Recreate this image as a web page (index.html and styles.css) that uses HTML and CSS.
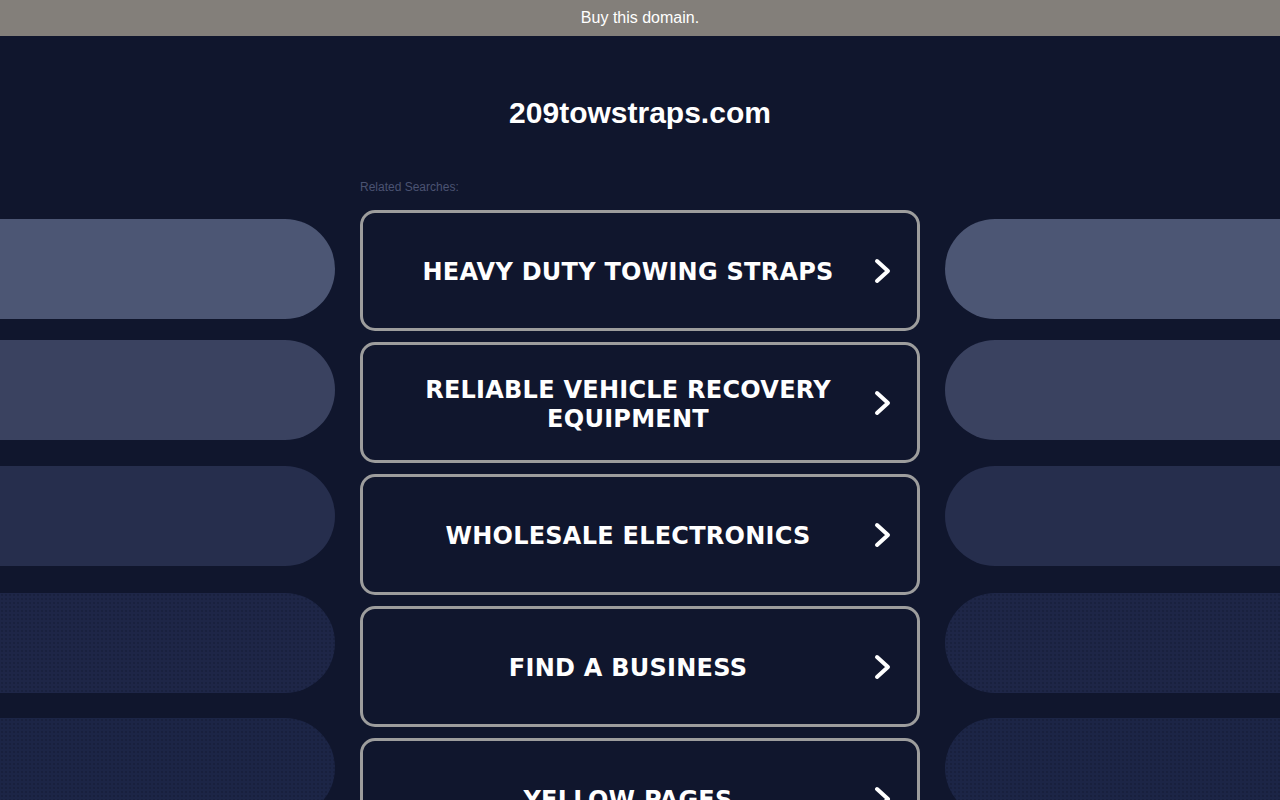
FILE: index.html
```html
<!DOCTYPE html>
<html lang="en">
<head>
<meta charset="utf-8">
<title>209towstraps.com</title>
<link rel="stylesheet" href="styles.css">
</head>
<body>
<div class="topbar"><a class="buy" href="#">Buy this domain.</a></div>
<header class="head">
  <h1 class="domain">209towstraps.com</h1>
  <div class="related-row"><span class="related">Related Searches:</span></div>
</header>
<div class="stage">
  <div class="pills pills-left">
    <div class="pill p1"></div>
    <div class="pill p2"></div>
    <div class="pill p3"></div>
    <div class="pill p4"></div>
    <div class="pill p5"></div>
  </div>
  <ul class="links">
    <li><a class="link" href="#"><span class="label">HEAVY DUTY TOWING STRAPS</span><svg class="chev" viewBox="0 0 20 28" width="20" height="28"><polyline points="4,4 15,14 4,24"/></svg></a></li>
    <li><a class="link" href="#"><span class="label">RELIABLE VEHICLE RECOVERY EQUIPMENT</span><svg class="chev" viewBox="0 0 20 28" width="20" height="28"><polyline points="4,4 15,14 4,24"/></svg></a></li>
    <li><a class="link" href="#"><span class="label">WHOLESALE ELECTRONICS</span><svg class="chev" viewBox="0 0 20 28" width="20" height="28"><polyline points="4,4 15,14 4,24"/></svg></a></li>
    <li><a class="link" href="#"><span class="label">FIND A BUSINESS</span><svg class="chev" viewBox="0 0 20 28" width="20" height="28"><polyline points="4,4 15,14 4,24"/></svg></a></li>
    <li><a class="link" href="#"><span class="label">YELLOW PAGES</span><svg class="chev" viewBox="0 0 20 28" width="20" height="28"><polyline points="4,4 15,14 4,24"/></svg></a></li>
  </ul>
  <div class="pills pills-right">
    <div class="pill p1"></div>
    <div class="pill p2"></div>
    <div class="pill p3"></div>
    <div class="pill p4"></div>
    <div class="pill p5"></div>
  </div>
</div>
</body>
</html>
```
FILE: styles.css
```css
html, body {
  margin: 0;
  padding: 0;
}
body {
  background: #10162d;
  font-family: "Liberation Sans", Arial, sans-serif;
  color: #fff;
  height: 800px;
  overflow: hidden;
}
.topbar {
  height: 36px;
  background: #837f7a;
  display: flex;
  align-items: center;
  justify-content: center;
}
.buy {
  color: #fff;
  text-decoration: none;
  font-size: 16px;
  line-height: 18px;
}
.head {
  display: flex;
  flex-direction: column;
  align-items: center;
}
.domain {
  margin: 60px 0 0;
  font-size: 30px;
  line-height: 34px;
  font-weight: bold;
  color: #fff;
}
.related-row {
  width: 560px;
  margin-top: 47px;
  height: 33px;
}
.related {
  font-size: 12px;
  line-height: 14px;
  color: #4b5372;
}
.stage {
  display: grid;
  grid-template-columns: 335px 560px 335px;
  column-gap: 25px;
  align-items: start;
}
.pills {
  display: flex;
  flex-direction: column;
  padding-top: 9px;
}
.pill {
  height: 100px;
  flex: none;
}
.pills-left .pill { border-radius: 0 50px 50px 0; }
.pills-right .pill { border-radius: 50px 0 0 50px; }
.p1 { background: #4c5674; }
.p2 { background: #3a4260; margin-top: 21px; }
.p3 { background: #262e4d; margin-top: 26px; }
.p4 {
  background-color: #1e2647;
  background-image: radial-gradient(circle, rgba(16,22,45,0.5) 0.6px, transparent 0.9px);
  background-size: 4px 4px;
  margin-top: 27px;
}
.p5 {
  background-color: #1c2546;
  background-image: radial-gradient(circle, rgba(16,22,45,0.5) 0.6px, transparent 0.9px);
  background-size: 4px 4px;
  margin-top: 25px;
}
.links {
  list-style: none;
  margin: 0;
  padding: 0;
  display: flex;
  flex-direction: column;
  gap: 11px;
}
.link {
  box-sizing: border-box;
  height: 121px;
  border: 3px solid #9d9d9d;
  border-radius: 15px;
  display: flex;
  align-items: center;
  padding: 0 24px 0 20px;
  text-decoration: none;
  color: #fff;
  background: #10162d;
}
.label {
  flex: 1;
  text-align: center;
  font-family: "DejaVu Sans", Verdana, sans-serif;
  font-weight: bold;
  font-size: 24px;
  line-height: 29px;
  letter-spacing: 0.25px;
  padding-top: 4px;
  color: #fff;
}
.chev {
  flex: none;
  display: block;
}
.chev polyline {
  fill: none;
  stroke: #fff;
  stroke-width: 4;
  stroke-linecap: round;
  stroke-linejoin: round;
}
```
